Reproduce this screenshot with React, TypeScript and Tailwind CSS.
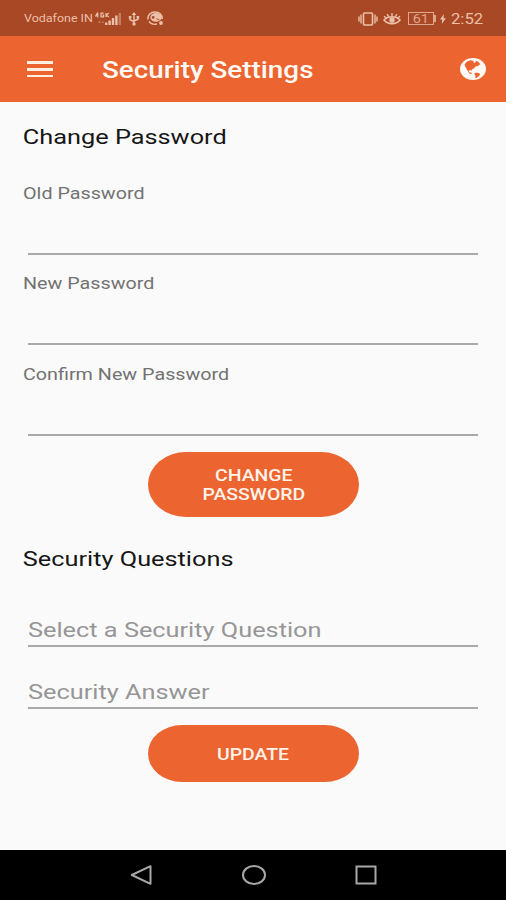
import { useState } from "react";
import { clsx } from "clsx";

function SignalIcon() {
  return (
    <svg className="h-[14px] w-[28px]" viewBox="0 0 28 14" fill="currentColor">
      <path d="M2.6 0.5 0.8 3.8h2.6M2.8 1v4.4" fill="none" stroke="currentColor" strokeWidth="1.2" />
      <path d="M8.6 1.2H6v3.7h2.6V3.2H7.5" fill="none" stroke="currentColor" strokeWidth="1.2" />
      <path d="M11 1v4M13.8 1 11.3 3l2.5 2" fill="none" stroke="currentColor" strokeWidth="1.2" />
      <path d="M3.5 9.5h2v1.5h-2zM7 9.5h1.5v1.5H7z" opacity="0.5" />
      <path d="M10 10.5h2.4V13H10zM13.4 8.5h2.4V13h-2.4zM16.8 6h2.4v7h-2.4zM20.2 3.5h2.4V13h-2.4z" />
      <path d="M23.6 1H26v12h-2.4z" opacity="0.45" />
    </svg>
  );
}

function UsbIcon() {
  return (
    <svg className="h-[14px] w-[12px]" viewBox="0 0 12 14" fill="none" stroke="currentColor" strokeWidth="1.4">
      <path d="M6 2v9M2 5.5v2.2l4 2M10 5v2.2L6 9" />
      <path d="M6 0 8.4 3H3.6zM0.8 4h2.6v2.6H0.8zM8.6 4h2.6v2.6H8.6z" fill="currentColor" stroke="none" />
      <circle cx="6" cy="12" r="1.7" fill="currentColor" stroke="none" />
    </svg>
  );
}

function AssistantIcon() {
  return (
    <svg className="h-[15px] w-[17px]" viewBox="0 0 17 15" fill="none" stroke="currentColor">
      <path d="M1 8.5C0.5 4 3.5 1 8 1s7.5 3 7.2 7" strokeWidth="1.5" />
      <ellipse cx="9" cy="6.4" rx="5.6" ry="4.4" fill="currentColor" stroke="none" />
      <circle cx="6.2" cy="6.4" r="1.3" fill="#a94825" stroke="none" />
      <path d="m9.5 7.6 3 1.6" stroke="#a94825" strokeWidth="1" />
      <path d="M2 10.5c2 2.7 5 3.2 8 2.5" strokeWidth="1.3" />
      <circle cx="14" cy="12" r="1.9" fill="currentColor" stroke="none" />
    </svg>
  );
}

function VibrateIcon() {
  return (
    <svg className="h-[14px] w-[20px]" viewBox="0 0 20 14" fill="none" stroke="currentColor" strokeWidth="1.6">
      <rect x="5.5" y="1" width="9" height="12" rx="1" />
      <path d="M3 2.5v9M1 4.5v5M17 2.5v9M19 4.5v5" strokeWidth="1.4" />
    </svg>
  );
}

function EyeIcon() {
  return (
    <svg className="h-[13px] w-[18px]" viewBox="0 0 18 13" fill="none" stroke="currentColor" strokeWidth="1.6">
      <path d="M1 8c4-4.3 12-4.3 16 0-4 4.8-12 4.8-16 0Z" />
      <circle cx="9" cy="8" r="2.7" fill="currentColor" stroke="none" />
      <path d="M9 1v3M4.2 2.2l1.3 2.4M13.8 2.2l-1.3 2.4M1 4.3l2 1.8M17 4.3l-2 1.8" strokeWidth="1.4" />
    </svg>
  );
}

function BoltIcon() {
  return (
    <svg className="h-[10px] w-[6px]" viewBox="0 0 6 10" fill="currentColor">
      <path d="M3.8 0 0.1 5.6h2.1L1.8 10 5.9 4.2H3.6z" />
    </svg>
  );
}

function GlobeIcon() {
  return (
    <svg className="h-[22px] w-[26px]" viewBox="0 0 26 22">
      <ellipse cx="13" cy="11" rx="13" ry="11" fill="#fffaf5" />
      <path
        d="M4.6 6.2 7 3.4 10.6 2.2l3.2.7-.6 1.4 1.6.8 1.3-2 2.4 1 1.8 2.2-2.6 1.6-2.2.5-1.5 2-2 .8-.3 1.6-1.5-.8-1.5.7.4 1.5 2 .3 1 1.8-2.7-.7L6.6 11 5.2 8.4z"
        fill="#ec642f"
      />
      <path d="M14.6 15.2 17 14.4l3.2 1.3-1 2.2-2.8 2-1.2.1.3-2.4-1.2-1.3z" fill="#ec642f" />
    </svg>
  );
}

function StatusBar() {
  return (
    <div className="flex h-9 items-center bg-[#a94825] pt-px pl-[24px] pr-[23px] text-[#ecbfa8]">
      <div className="w-[71px] whitespace-nowrap pt-px text-[10.4px]">
        <span className="inline-block origin-left scale-x-[1.2]">Vodafone IN</span>
      </div>
      <SignalIcon />
      <div className="ml-[5px]"><UsbIcon /></div>
      <div className="ml-[7px]"><AssistantIcon /></div>
      <div className="ml-auto"><VibrateIcon /></div>
      <div className="ml-[5px]"><EyeIcon /></div>
      <div className="ml-[7px] flex items-center opacity-80">
        <div className="flex h-[13px] w-[26px] items-center justify-center border border-current text-[12px] leading-none">
          <span className="inline-block scale-x-[1.2]">61</span>
        </div>
        <div className="h-[7px] w-[2px] bg-current" />
      </div>
      <div className="ml-[4px]"><BoltIcon /></div>
      <div className="ml-[5px] w-[32px] whitespace-nowrap pt-[3px] text-[14.5px] leading-5">
        <span className="inline-block origin-left scale-x-[1.15]">2:52</span>
      </div>
    </div>
  );
}

function Heading({ children }: { children: string }) {
  return (
    <h2 className="origin-left scale-x-[1.2] whitespace-nowrap pl-[19px] text-[21.1px] leading-6 text-[#161616]">
      {children}
    </h2>
  );
}

function PasswordField({ label }: { label: string }) {
  const [value, setValue] = useState("");

  return (
    <label className="block h-[90.4px]">
      <span className="block origin-left scale-x-[1.2] whitespace-nowrap pl-[19.2px] text-[16.45px] leading-5 text-[#727272]">
        {label}
      </span>
      <input
        type="password"
        value={value}
        onChange={(e) => setValue(e.target.value)}
        className="mx-7 block h-[51px] w-[450px] border-b-2 border-[#a9a9a9] bg-transparent outline-none"
      />
    </label>
  );
}

function HintField({ hint, className }: { hint: string; className?: string }) {
  return (
    <div className={clsx("mx-7 w-[450px] border-b-2 border-[#a9a9a9]", className)}>
      <div className="origin-left scale-x-[1.2] whitespace-nowrap text-[21.1px] leading-[30px] text-[#969696]">
        {hint}
      </div>
    </div>
  );
}

function PillButton({ children, className }: { children: React.ReactNode; className?: string }) {
  return (
    <button
      className={clsx(
        "mx-auto flex w-[211px] items-center justify-center bg-[#ec642f] pt-[2px] pl-px text-[16.2px] font-medium leading-[19.5px] text-[#fff3ea]",
        className,
      )}
    >
      <span className="inline-block scale-x-[1.2]">{children}</span>
    </button>
  );
}

export default function App() {
  return (
    <div className="flex h-[900px] w-[506px] flex-col overflow-hidden bg-[#fafafa] font-[Roboto,sans-serif]">
      <StatusBar />

      <header className="flex h-[66px] items-center bg-[#ec642f] pl-[27px] pr-[20px]">
        <button className="flex w-[26px] flex-col gap-[4px]" aria-label="Menu">
          <span className="h-[3px] bg-[#fff0e2]" />
          <span className="h-[3px] bg-[#fff0e2]" />
          <span className="h-[2px] bg-[#fff0e2]" />
        </button>
        <h1 className="ml-[49px] origin-left scale-x-[1.2] whitespace-nowrap pt-[3px] text-[23.2px] font-medium text-[#fffaf5]">
          Security Settings
        </h1>
        <button className="ml-auto" aria-label="Language">
          <GlobeIcon />
        </button>
      </header>

      <main className="flex-1 pt-[23px]">
        <Heading>Change Password</Heading>
        <div className="pt-[35px]">
          <PasswordField label="Old Password" />
          <PasswordField label="New Password" />
          <PasswordField label="Confirm New Password" />
        </div>
        <PillButton className="-mt-[3.2px] h-[65px] rounded-[38px/32.5px]">
          CHANGE
          <br />
          PASSWORD
        </PillButton>

        <div className="pt-[30px]">
          <Heading>Security Questions</Heading>
        </div>
        <HintField className="mt-[44px]" hint="Select a Security Question" />
        <HintField className="mt-[30px]" hint="Security Answer" />
        <PillButton className="mt-[16px] h-[57px] rounded-[34px/28.5px]">UPDATE</PillButton>
      </main>

      <nav className="flex h-[50px] items-center justify-between bg-black pl-[130px] pr-[129px] text-[#a8a8a8]">
        <svg className="h-[20px] w-[22px]" viewBox="0 0 22 20" fill="none" stroke="currentColor" strokeWidth="2">
          <path d="M1.8 10 20.5 1.2v17.6z" strokeLinejoin="round" />
        </svg>
        <svg className="h-[20px] w-[24px]" viewBox="0 0 24 20" fill="none" stroke="currentColor" strokeWidth="2">
          <ellipse cx="12" cy="10" rx="11" ry="9" />
        </svg>
        <svg className="h-[20px] w-[22px]" viewBox="0 0 22 20" fill="none" stroke="currentColor" strokeWidth="2">
          <rect x="1.5" y="1.5" width="19" height="17" />
        </svg>
      </nav>
    </div>
  );
}
